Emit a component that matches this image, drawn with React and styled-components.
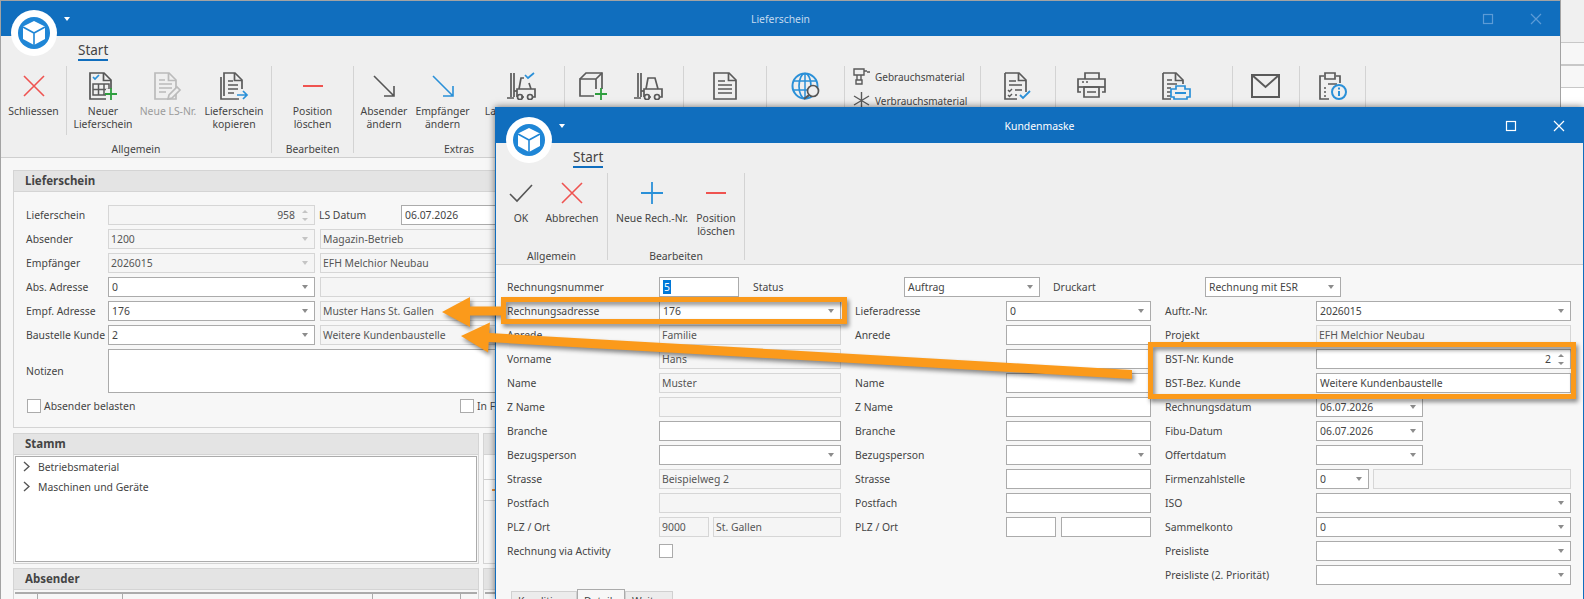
import React from 'react'
import styled, { createGlobalStyle } from 'styled-components'

const GlobalStyle = createGlobalStyle`
  html, body {
    margin: 0;
    padding: 0;
    background: #fff;
    overflow: hidden;
  }
  * { box-sizing: border-box; }
`

const BLUE = '#106ebe'
const ICON_BLUE = '#2a90d8'
const GREEN = '#2e9e3e'
const RED = '#ef5350'

const Ico = ({ w = 30, h = 28, children }) => (
  <svg width={w} height={h} viewBox={`0 0 ${w} ${h}`} fill="none" stroke="#5a5a5a" strokeWidth="1.7">
    {children}
  </svg>
)

const DocShape = ({ color }) => (
  <>
    <path d="M2 1h14l7 7v19H2z" stroke={color} />
    <path d="M15.5 1v7.5H23" stroke={color} />
  </>
)

const Plus = ({ x, y }) => (
  <path d={`M${x - 6} ${y}h12M${x} ${y - 6}v12`} stroke={GREEN} strokeWidth="1.8" />
)

const CloseIcon = () => (
  <Ico w={24} h={24}>
    <path d="M2 2l20 20M22 2L2 22" stroke={RED} strokeWidth="1.6" />
  </Ico>
)
const MinusIcon = () => (
  <Ico w={24} h={24}>
    <path d="M2 12h20" stroke={RED} strokeWidth="2" />
  </Ico>
)
const PlusIcon = () => (
  <Ico w={24} h={24}>
    <path d="M1 12h22M12 1v22" stroke={ICON_BLUE} strokeWidth="1.8" />
  </Ico>
)
const CheckIcon = () => (
  <Ico w={24} h={20}>
    <path d="M1 11l7 7L23 2" stroke="#555" strokeWidth="1.6" />
  </Ico>
)
const ArrowIcon = ({ color = '#555' }) => (
  <Ico w={24} h={24}>
    <path d="M2 2l20 20M22 12v10H12" stroke={color} strokeWidth="1.6" />
  </Ico>
)
const NewDocIcon = () => (
  <Ico>
    <DocShape color="#555" />
    <path d="M5 5l2 2 4-4" stroke={ICON_BLUE} />
    <path d="M5 12h16v11H5zM5 17.5h16M10.5 12v11M16 12v11" strokeWidth="1.5" />
    <path d="M18 17h12v11H18z" fill="#efefef" stroke="none" />
    <Plus x={23} y={22} />
  </Ico>
)
const EditDocIcon = () => (
  <Ico>
    <DocShape color="#bbb" />
    <path d="M6 8h6M6 12h13M6 16h13M6 20h7" stroke="#bbb" />
    <path d="M15 27l1-4 8-8 3 3-8 8z" stroke="#bbb" fill="#efefef" />
  </Ico>
)
const CopyDocIcon = () => (
  <Ico>
    <path d="M2 5v22h18" />
    <path d="M5 24V1h11l7 7v9" />
    <path d="M15.5 1v7.5H23" />
    <path d="M9 9h5M9 13h10M9 17h10M9 21h6" strokeWidth="1.5" />
    <path d="M18 23h10M24 19l4 4-4 4" stroke={ICON_BLUE} strokeWidth="1.7" />
  </Ico>
)
const ForkliftIcon = ({ checked }) => (
  <Ico>
    <path d="M5 1v24M8 1v24M1 26h7" />
    <path d="M8 19h3" />
    {checked ? <path d="M13 17l2-11h3M23 11l2 6" /> : <path d="M13 17l2-11h7l3 11" />}
    <path d="M11 25v-8h18v8h-2M18 25h-3" />
    <circle cx="14" cy="25" r="2.5" />
    <circle cx="24" cy="25" r="2.5" />
    {checked && <path d="M19 3l3 3 6-5" stroke={ICON_BLUE} />}
  </Ico>
)
const BoxIcon = () => (
  <Ico>
    <path d="M2 7l6-6h16v17" />
    <path d="M2 7h16v17H2zM18 7l6-6" />
    <path d="M16 17h14v11H16z" fill="#efefef" stroke="none" />
    <Plus x={23} y={22} />
  </Ico>
)
const PlainDocIcon = () => (
  <Ico w={24}>
    <path d="M1 1h15l7 7v19H1z" />
    <path d="M15.5 1v7.5H23" />
    <path d="M5 9h7M5 13h14M5 17h14M5 21h14" strokeWidth="1.5" />
  </Ico>
)
const GlobeIcon = () => (
  <Ico>
    <circle cx="14" cy="14" r="12.5" stroke={ICON_BLUE} strokeWidth="2" />
    <ellipse cx="14" cy="14" rx="6" ry="12.5" stroke={ICON_BLUE} />
    <path d="M14 1v26M2 9h24M2 18h24" stroke={ICON_BLUE} strokeWidth="1.5" />
    <circle cx="22" cy="19" r="5.5" fill="#efefef" stroke="#555" />
    <path d="M18 23l-5 4" strokeWidth="2" />
  </Ico>
)
const ChecklistIcon = () => (
  <Ico>
    <path d="M2 1h14l7 7v12M14 27H2V1" />
    <path d="M15.5 1v7.5H23" />
    <path d="M6 9h7M6 13h13M5 18l1.5 1.5L9 17M12 18h7M5 23l1.5 1.5L9 22M12 23h2" strokeWidth="1.4" />
    <path d="M17 23l3 3 7-7" stroke={ICON_BLUE} strokeWidth="1.8" />
  </Ico>
)
const PrinterIcon = () => (
  <Ico>
    <path d="M8 7V1h14v6" />
    <path d="M4 20H1V7h27v13h-3" />
    <path d="M1 15h27" />
    <path d="M7 15h15v10H7z" />
    <path d="M10 20h9M5 10h2M9 10h2" strokeWidth="1.4" />
  </Ico>
)
const PrintDocIcon = () => (
  <Ico>
    <path d="M2 1h13l7 7v4M10 27H2V1" />
    <path d="M14.5 1v7.5H22" />
    <path d="M6 8h5M6 12h10M6 16h4M6 20h4M6 24h4" strokeWidth="1.4" />
    <path d="M15 14h9v3h5v8h-3v2H13v-2h-3v-8h5z" fill="#efefef" stroke={ICON_BLUE} />
    <path d="M14 21h11" stroke={ICON_BLUE} strokeWidth="2" />
  </Ico>
)
const MailIcon = () => (
  <Ico h={24}>
    <path d="M1 1h27v22H1zM1 1l13.5 12L28 1" strokeWidth="2" />
  </Ico>
)
const ClipInfoIcon = () => (
  <Ico>
    <path d="M6 4H2v23h9M22 11V4h-4" />
    <path d="M7 1h10v6H7z" />
    <path d="M10 12h9M6 16h2M6 20h2M6 24h2" strokeWidth="1.5" />
    <circle cx="21" cy="20" r="7" fill="#efefef" stroke={ICON_BLUE} strokeWidth="2" />
    <path d="M21 19v5M21 15.5v2" stroke={ICON_BLUE} strokeWidth="2" />
  </Ico>
)
const DrillIcon = () => (
  <Ico w={17} h={17}>
    <path d="M1 1h10v6H1zM11 3h3M14 4h3" strokeWidth="1.4" />
    <path d="M4 7v5h4V7M3 12h6v4H3z" strokeWidth="1.4" />
  </Ico>
)
const AsteriskIcon = () => (
  <Ico w={17} h={17}>
    <path d="M8.5 0v17M1 4l15 9M16 4L1 13" strokeWidth="1.4" />
  </Ico>
)
const ChevronIcon = () => (
  <svg width="7" height="11" viewBox="0 0 7 11" fill="none" stroke="#555" strokeWidth="1.4">
    <path d="M1 1l5 4.5L1 10" />
  </svg>
)
const LogoMark = () => (
  <svg width="46" height="46" viewBox="0 0 46 46">
    <circle cx="23" cy="23" r="23" fill="#fff" />
    <circle cx="23" cy="23" r="16" fill="#1f86d6" />
    <path d="M23 11l11 5.5v12.5L23 35 12 29V16.5z" fill="#fff" />
    <path d="M12 17l11 6 11-6M23 23v12" stroke="#1f86d6" strokeWidth="1.6" fill="none" />
  </svg>
)
const ChromeGlyph = ({ kind }) => (
  <svg width="14" height="14" viewBox="0 0 14 14" fill="none" stroke="currentColor" strokeWidth="1.2">
    {kind === 'max' ? <rect x="2.5" y="2.5" width="9" height="9" /> : <path d="M2 2l10 10M12 2L2 12" />}
  </svg>
)

const Desktop = styled.div`
  position: relative;
  width: 1584px;
  height: 599px;
  overflow: hidden;
  background: #fff;
  font-family: 'Noto Sans', 'Liberation Sans', sans-serif;
  font-size: 10.4px;
  color: #444;
`
const Backdrop = styled.div`
  position: absolute;
  left: 1561px;
  top: 0;
  right: 0;
  display: flex;
  flex-direction: column;
`
const BackdropBand = styled.div`
  height: ${(p) => p.$h}px;
  background: ${(p) => p.$bg};
  border-bottom: ${(p) => p.$line}px solid #c8c8c8;
`
const Window = styled.section`
  position: absolute;
  left: ${(p) => p.$left}px;
  top: ${(p) => p.$top}px;
  width: ${(p) => p.$width}px;
  height: ${(p) => p.$height}px;
  border: 1px solid ${(p) => p.$edge};
  border-bottom: 0;
  background: #f7f7f7;
  overflow: hidden;
  box-shadow: ${(p) => (p.$raised ? '0 0 7px rgba(0, 0, 0, 0.55)' : 'none')};
`
const TitleBar = styled.header`
  height: 35px;
  background: ${BLUE};
  display: grid;
  grid-template-columns: 1fr auto 1fr;
  align-items: center;
`
const QuickMenu = styled.div`
  padding-left: 63px;
`
const Caret = styled.div`
  width: 0;
  height: 0;
  border-left: 3.5px solid transparent;
  border-right: 3.5px solid transparent;
  border-top: 4px solid #fff;
`
const WindowTitle = styled.div`
  color: ${(p) => (p.$active ? '#fff' : '#c3daef')};
`
const Controls = styled.div`
  justify-self: end;
  display: flex;
  color: ${(p) => (p.$active ? '#fff' : '#5c9bd6')};
`
const ControlButton = styled.div`
  width: 48px;
  height: 35px;
  display: flex;
  align-items: center;
  justify-content: center;
`
const Logo = styled.div`
  position: absolute;
  left: 10px;
  top: 9px;
  line-height: 0;
`
const Ribbon = styled.div`
  height: 122px;
  background: #efefef;
  border-bottom: 1px solid #cfcfcf;
`
const RibbonTabs = styled.div`
  height: 30px;
  padding: 5px 0 0 77px;
  display: flex;
  align-items: flex-start;
`
const RibbonTab = styled.div`
  height: 20px;
  font-size: 13.5px;
  line-height: 18px;
  border-bottom: 2px solid ${BLUE};
`
const RibbonGroups = styled.div`
  display: flex;
  height: 87px;
`
const Group = styled.div`
  width: ${(p) => p.$w}px;
  flex: none;
  display: flex;
  flex-direction: column;
  border-right: 1px solid #d3d3d3;
`
const GroupItems = styled.div`
  height: 76px;
  flex: none;
  display: flex;
`
const GroupLabel = styled.div`
  text-align: center;
  line-height: 14px;
  margin-bottom: -3px;
`
const Divider = styled.div`
  width: 1px;
  height: 69px;
  background: #d3d3d3;
  margin-left: ${(p) => p.$gap || 0}px;
`
const Item = styled.div`
  width: ${(p) => p.$w}px;
  flex: none;
  display: flex;
  flex-direction: column;
  align-items: center;
  padding-top: 6px;
  color: ${(p) => (p.$off ? '#9b9b9b' : '#444')};
`
const ItemIcon = styled.div`
  height: 28px;
  display: flex;
  align-items: center;
  justify-content: center;
  margin-bottom: 5px;
`
const ItemText = styled.div`
  line-height: 13px;
  text-align: center;
  white-space: pre;
`
const MaterialList = styled.div`
  display: flex;
  flex-direction: column;
  gap: 7px;
  padding: 2px 0 0 8px;
`
const MaterialRow = styled.div`
  display: flex;
  align-items: center;
  gap: 5px;
  height: 17px;
  font-size: 10px;
`

const OuterBody = styled.div`
  padding: 12px 0 0 12px;
  display: flex;
  flex-direction: column;
  gap: 4px;
`
const Panel = styled.section`
  height: ${(p) => p.$h}px;
  border: 1px solid #d4d4d4;
  background: #f7f7f7;
  overflow: hidden;
`
const PanelHead = styled.div`
  height: 21px;
  background: #e4e4e4;
  border-bottom: 1px solid #d4d4d4;
  padding-left: 11px;
  font-weight: 700;
  line-height: 20px;
  font-size: 11.5px;
`
const PanelRows = styled.div`
  padding: 13px 0 0 12px;
  display: flex;
  flex-direction: column;
  gap: 4px;
`
const SplitRow = styled.div`
  display: grid;
  grid-template-columns: 466px 1090px;
  gap: 4px;
  margin-top: ${(p) => p.$top || 0}px;
`
const Row = styled.div`
  display: flex;
  align-items: center;
  height: ${(p) => p.$h || 20}px;
`
const Label = styled.div`
  width: ${(p) => p.$w}px;
  flex: none;
  white-space: nowrap;
  padding: 0 0 1px ${(p) => p.$pad || 0}px;
`
const Gap = styled.div`
  width: ${(p) => p.$w}px;
  flex: none;
`
const Field = styled.div`
  width: ${(p) => p.$w}px;
  flex: none;
  height: 20px;
  display: flex;
  align-items: center;
  padding: 0 6px 0 ${(p) => (p.$off ? 2 : 3)}px;
  border: 1px solid ${(p) => (p.$off ? '#d6d6d6' : '#ababab')};
  background: ${(p) => (p.$off ? '#f5f5f5' : '#fff')};
  color: ${(p) => (p.$off ? '#555' : '#444')};
  white-space: nowrap;
`
const FieldText = styled.span`
  flex: 1;
  padding-bottom: 1px;
  text-align: ${(p) => (p.$right ? 'right' : 'left')};
  padding-right: ${(p) => (p.$right ? 7 : 0)}px;
`
const Selected = styled.span`
  background: #0078d7;
  color: #fff;
  padding: 0 1px;
`
const DropArrow = styled.span`
  width: 0;
  height: 0;
  border-left: 3.5px solid transparent;
  border-right: 3.5px solid transparent;
  border-top: 4px solid ${(p) => (p.$off ? '#c4c4c4' : '#8c8c8c')};
`
const Spinner = styled.span`
  display: flex;
  flex-direction: column;
  gap: 5px;
`
const SpinUp = styled.span`
  width: 0;
  height: 0;
  border-left: 3px solid transparent;
  border-right: 3px solid transparent;
  border-bottom: 3px solid ${(p) => (p.$off ? '#c4c4c4' : '#8c8c8c')};
`
const SpinDown = styled(SpinUp)`
  border-bottom: 0;
  border-top: 3px solid ${(p) => (p.$off ? '#c4c4c4' : '#8c8c8c')};
`
const Notes = styled.div`
  width: 1400px;
  height: 44px;
  background: #fff;
  border: 1px solid #ababab;
`
const CheckLine = styled.div`
  display: flex;
  align-items: center;
  height: 14px;
  margin-top: 2px;
  padding-left: 1px;
`
const CheckBox = styled.div`
  width: 14px;
  height: 14px;
  flex: none;
  background: #fff;
  border: 1px solid #ababab;
`
const CheckCaption = styled.span`
  width: ${(p) => p.$w}px;
  flex: none;
  padding-left: 3px;
  white-space: nowrap;
`
const TreeBox = styled.div`
  height: 106px;
  margin: 1px;
  background: #fff;
  border: 1px solid #ababab;
`
const TreeRow = styled.div`
  height: 20px;
  display: flex;
  align-items: center;
  gap: 8px;
  padding: 0 0 1px 7px;
`
const SideRow = styled.div`
  height: ${(p) => p.$h}px;
  background: #fbfbfb;
  border-bottom: 1px solid #cfcfcf;
  display: flex;
  align-items: center;
  padding-left: 8px;
`
const OrangeMark = styled.span`
  width: 5px;
  height: 2px;
  background: #e8903a;
`
const GridHead = styled.div`
  margin: 2px 1px 0;
  height: 12px;
  border-top: 2px solid #ababab;
  display: grid;
  grid-template-columns: 23px 85px 250px 88px 1fr;
`
const GridCol = styled.div`
  border-right: 1px solid #ababab;
`

const InnerBody = styled.div`
  padding: 12px 0 0 11px;
  display: flex;
  flex-direction: column;
  gap: 4px;
`
const Columns = styled.div`
  display: flex;
  gap: 14px;
`
const Column = styled.div`
  width: ${(p) => p.$w}px;
  flex: none;
  display: flex;
  flex-direction: column;
  gap: 4px;
`
const Tabs = styled.div`
  display: flex;
  align-items: flex-start;
  margin-left: 4px;
  height: 12px;
`
const Tab = styled.div`
  width: ${(p) => p.$w}px;
  height: 22px;
  margin-top: ${(p) => (p.$active ? 0 : 2)}px;
  padding: ${(p) => (p.$active ? 4 : 2)}px 0 0 6px;
  background: ${(p) => (p.$active ? '#f7f7f7' : '#ececec')};
  border: 1px solid ${(p) => (p.$active ? '#ababab' : '#d0d0d0')};
`

const Overlay = styled.svg`
  position: absolute;
  left: 0;
  top: 0;
  filter: drop-shadow(2px 3px 2px rgba(0, 0, 0, 0.45));
`

const ComboField = ({ w, value }) => (
  <Field $w={w}>
    <FieldText>{value}</FieldText>
    <DropArrow />
  </Field>
)
const TextField = ({ w, value, off }) => (
  <Field $w={w} $off={off}>
    <FieldText>{value}</FieldText>
  </Field>
)
const SpinField = ({ w, value, off }) => (
  <Field $w={w} $off={off}>
    <FieldText $right>{value}</FieldText>
    <Spinner>
      <SpinUp $off={off} />
      <SpinDown $off={off} />
    </Spinner>
  </Field>
)

const renderField = (kind, w, value) => {
  if (kind === 'combo') return <ComboField w={w} value={value} />
  if (kind === 'spin') return <SpinField w={w} value={value} />
  return <TextField w={w} value={value} off={kind === 'ro'} />
}

const FormRow = ({ label, labelW, w, kind, value }) => (
  <Row>
    <Label $w={labelW}>{label}</Label>
    {renderField(kind, w, value)}
  </Row>
)

const addressRows = [
  ['Anrede', 'ro', 'Familie'],
  ['Vorname', 'ro', 'Hans'],
  ['Name', 'ro', 'Muster'],
  ['Z Name', 'ro', ''],
  ['Branche', 'text', ''],
  ['Bezugsperson', 'combo', ''],
  ['Strasse', 'ro', 'Beispielweg 2'],
  ['Postfach', 'ro', ''],
]
const deliveryRows = [
  ['Lieferadresse', 'combo', '0'],
  ['Anrede', 'text', ''],
  ['Vorname', 'text', ''],
  ['Name', 'text', ''],
  ['Z Name', 'text', ''],
  ['Branche', 'text', ''],
  ['Bezugsperson', 'combo', ''],
  ['Strasse', 'text', ''],
  ['Postfach', 'text', ''],
]
const orderRowsTop = [
  ['Auftr.-Nr.', 'combo', '2026015', 255],
  ['Projekt', 'ro', 'EFH Melchior Neubau', 255],
  ['BST-Nr. Kunde', 'spin', '2', 255],
  ['BST-Bez. Kunde', 'text', 'Weitere Kundenbaustelle', 255],
  ['Rechnungsdatum', 'combo', '06.07.2026', 107],
  ['Fibu-Datum', 'combo', '06.07.2026', 107],
  ['Offertdatum', 'combo', '', 107],
]
const orderRowsBottom = [
  ['ISO', ''],
  ['Sammelkonto', '0'],
  ['Preisliste', ''],
  ['Preisliste (2. Priorität)', ''],
]
const shipmentRows = [
  ['Absender', '1200', 'Magazin-Betrieb', true],
  ['Empfänger', '2026015', 'EFH Melchior Neubau', true],
  ['Abs. Adresse', '0', ''],
  ['Empf. Adresse', '176', 'Muster Hans St. Gallen'],
  ['Baustelle Kunde', '2', 'Weitere Kundenbaustelle'],
]

const Chrome = ({ title, active }) => (
  <>
    <TitleBar>
      <QuickMenu>
        <Caret />
      </QuickMenu>
      <WindowTitle $active={active}>{title}</WindowTitle>
      <Controls $active={active}>
        <ControlButton>
          <ChromeGlyph kind="max" />
        </ControlButton>
        <ControlButton>
          <ChromeGlyph kind="close" />
        </ControlButton>
      </Controls>
    </TitleBar>
    <Logo>
      <LogoMark />
    </Logo>
  </>
)

const Tool = ({ w, icon, text, off }) => (
  <Item $w={w} $off={off}>
    <ItemIcon>{icon}</ItemIcon>
    <ItemText>{text}</ItemText>
  </Item>
)

const OuterRibbon = () => (
  <Ribbon>
    <RibbonTabs>
      <RibbonTab>Start</RibbonTab>
    </RibbonTabs>
    <RibbonGroups>
      <Group $w={271}>
        <GroupItems>
          <Tool w={65} icon={<CloseIcon />} text="Schliessen" />
          <Divider />
          <Tool w={72} icon={<NewDocIcon />} text={'Neuer\nLieferschein'} />
          <Tool w={58} icon={<EditDocIcon />} text="Neue LS-Nr." off />
          <Tool w={74} icon={<CopyDocIcon />} text={'Lieferschein\nkopieren'} />
        </GroupItems>
        <GroupLabel>Allgemein</GroupLabel>
      </Group>
      <Group $w={82}>
        <GroupItems>
          <Tool w={81} icon={<MinusIcon />} text={'Position\nlöschen'} />
        </GroupItems>
        <GroupLabel>Bearbeiten</GroupLabel>
      </Group>
      <Group $w={211}>
        <GroupItems>
          <Tool w={60} icon={<ArrowIcon />} text={'Absender\nändern'} />
          <Tool w={57} icon={<ArrowIcon color={ICON_BLUE} />} text={'Empfänger\nändern'} />
          <Divider $gap={6} />
          <Tool w={87} icon={<ForkliftIcon checked />} text="Lagerbuchung" />
        </GroupItems>
        <GroupLabel>Extras</GroupLabel>
      </Group>
      <Group $w={119}>
        <GroupItems>
          <Tool w={55} icon={<BoxIcon />} />
          <Tool w={55} icon={<ForkliftIcon />} />
        </GroupItems>
      </Group>
      <Group $w={83}>
        <GroupItems>
          <Tool w={82} icon={<PlainDocIcon />} />
        </GroupItems>
      </Group>
      <Group $w={78}>
        <GroupItems>
          <Tool w={77} icon={<GlobeIcon />} />
        </GroupItems>
      </Group>
      <Group $w={136}>
        <MaterialList>
          <MaterialRow>
            <DrillIcon />
            Gebrauchsmaterial
          </MaterialRow>
          <MaterialRow>
            <AsteriskIcon />
            Verbrauchsmaterial
          </MaterialRow>
        </MaterialList>
      </Group>
      <Group $w={75}>
        <GroupItems>
          <Tool w={74} icon={<ChecklistIcon />} />
        </GroupItems>
      </Group>
      <Group $w={177}>
        <GroupItems>
          <Tool w={72} icon={<PrinterIcon />} />
          <Tool w={96} icon={<PrintDocIcon />} />
        </GroupItems>
      </Group>
      <Group $w={67}>
        <GroupItems>
          <Tool w={66} icon={<MailIcon />} />
        </GroupItems>
      </Group>
      <Group $w={66}>
        <GroupItems>
          <Tool w={65} icon={<ClipInfoIcon />} />
        </GroupItems>
      </Group>
    </RibbonGroups>
  </Ribbon>
)

const InnerRibbon = () => (
  <Ribbon>
    <RibbonTabs>
      <RibbonTab>Start</RibbonTab>
    </RibbonTabs>
    <RibbonGroups>
      <Group $w={112}>
        <GroupItems>
          <Tool w={50} icon={<CheckIcon />} text="OK" />
          <Tool w={52} icon={<CloseIcon />} text="Abbrechen" />
        </GroupItems>
        <GroupLabel>Allgemein</GroupLabel>
      </Group>
      <Group $w={137}>
        <GroupItems>
          <Tool w={88} icon={<PlusIcon />} text="Neue Rech.-Nr." />
          <Tool w={40} icon={<MinusIcon />} text={'Position\nlöschen'} />
        </GroupItems>
        <GroupLabel>Bearbeiten</GroupLabel>
      </Group>
    </RibbonGroups>
  </Ribbon>
)

const App = () => (
  <Desktop>
    <GlobalStyle />
    <Backdrop>
      <BackdropBand $h={43} $bg="#f0f0f0" $line={1} />
      <BackdropBand $h={23} $bg="#f7f7f7" $line={2} />
      <BackdropBand $h={22} $bg="#f7f7f7" $line={1} />
    </Backdrop>

    <Window $left={0} $top={0} $width={1561} $height={599} $edge="#a3a3a3">
      <Chrome title="Lieferschein" />
      <OuterRibbon />
      <OuterBody>
        <Panel $h={258}>
          <PanelHead>Lieferschein</PanelHead>
          <PanelRows>
            <Row>
              <Label $w={82}>Lieferschein</Label>
              <SpinField w={207} value="958" off />
              <Label $w={86} $pad={4}>
                LS Datum
              </Label>
              <ComboField w={400} value="06.07.2026" />
            </Row>
            {shipmentRows.map(([label, code, name, locked]) => (
              <Row key={label}>
                <Label $w={82}>{label}</Label>
                <Field $w={207} $off={locked}>
                  <FieldText>{code}</FieldText>
                  <DropArrow $off={locked} />
                </Field>
                <Gap $w={5} />
                <TextField w={600} value={name} off />
              </Row>
            ))}
            <Row $h={44}>
              <Label $w={82}>Notizen</Label>
              <Notes />
            </Row>
            <CheckLine>
              <CheckBox />
              <CheckCaption $w={419}>Absender belasten</CheckCaption>
              <CheckBox />
              <CheckCaption $w={24}>In F</CheckCaption>
            </CheckLine>
          </PanelRows>
        </Panel>
        <SplitRow $top={1}>
          <Panel $h={131}>
            <PanelHead>Stamm</PanelHead>
            <TreeBox>
              <TreeRow>
                <ChevronIcon />
                Betriebsmaterial
              </TreeRow>
              <TreeRow>
                <ChevronIcon />
                Maschinen und Geräte
              </TreeRow>
            </TreeBox>
          </Panel>
          <Panel $h={131}>
            <PanelHead />
            <SideRow $h={25} />
            <SideRow $h={21}>
              <OrangeMark />
            </SideRow>
          </Panel>
        </SplitRow>
        <SplitRow>
          <Panel $h={40}>
            <PanelHead>Absender</PanelHead>
            <GridHead>
              <GridCol />
              <GridCol />
              <GridCol />
              <GridCol />
            </GridHead>
          </Panel>
          <Panel $h={40}>
            <PanelHead />
            <GridHead />
          </Panel>
        </SplitRow>
      </OuterBody>
    </Window>

    <Window $left={495} $top={107} $width={1089} $height={492} $edge={BLUE} $raised>
      <Chrome title="Kundenmaske" active />
      <InnerRibbon />
      <InnerBody>
        <Row>
          <Label $w={152}>Rechnungsnummer</Label>
          <Field $w={80}>
            <FieldText>
              <Selected>5</Selected>
            </FieldText>
          </Field>
          <Label $w={165} $pad={14}>
            Status
          </Label>
          <ComboField w={136} value="Auftrag" />
          <Label $w={165} $pad={13}>
            Druckart
          </Label>
          <ComboField w={136} value="Rechnung mit ESR" />
        </Row>
        <Columns>
          <Column $w={334}>
            <FormRow label="Rechnungsadresse" labelW={152} w={182} kind="combo" value="176" />
            {addressRows.map(([label, kind, value]) => (
              <FormRow key={label} label={label} labelW={152} w={182} kind={kind} value={value} />
            ))}
            <Row>
              <Label $w={152}>PLZ / Ort</Label>
              <TextField w={50} value="9000" off />
              <Gap $w={4} />
              <TextField w={128} value="St. Gallen" off />
            </Row>
            <Row>
              <Label $w={152}>Rechnung via Activity</Label>
              <CheckBox />
            </Row>
          </Column>
          <Column $w={296}>
            {deliveryRows.map(([label, kind, value]) => (
              <FormRow key={label} label={label} labelW={151} w={145} kind={kind} value={value} />
            ))}
            <Row>
              <Label $w={151}>PLZ / Ort</Label>
              <TextField w={50} value="" />
              <Gap $w={5} />
              <TextField w={90} value="" />
            </Row>
          </Column>
          <Column $w={406}>
            {orderRowsTop.map(([label, kind, value, w]) => (
              <FormRow key={label} label={label} labelW={151} w={w} kind={kind} value={value} />
            ))}
            <Row>
              <Label $w={151}>Firmenzahlstelle</Label>
              <ComboField w={53} value="0" />
              <Gap $w={4} />
              <TextField w={198} value="" off />
            </Row>
            {orderRowsBottom.map(([label, value]) => (
              <FormRow key={label} label={label} labelW={151} w={255} kind="combo" value={value} />
            ))}
          </Column>
        </Columns>
        <Tabs>
          <Tab $w={66}>Konditionen</Tab>
          <Tab $w={48} $active>
            Details
          </Tab>
          <Tab $w={48}>Weiteres</Tab>
        </Tabs>
      </InnerBody>
    </Window>

    <Overlay width="1584" height="599" viewBox="0 0 1584 599">
      <g fill="none" stroke="#fb9a1b" strokeWidth="5">
        <rect x="503.5" y="299.5" width="341" height="22" />
        <rect x="1150.5" y="344.5" width="423" height="52" />
      </g>
      <g fill="#fb9a1b">
        <path d="M442 312L470 297V306.5H501V315.5H470V327Z" />
        <path d="M461 336L489.9 322.6L489.3 333.1L1132 369.9V379L488.7 342.1L488.1 352.6Z" />
      </g>
    </Overlay>
  </Desktop>
)

export default App
